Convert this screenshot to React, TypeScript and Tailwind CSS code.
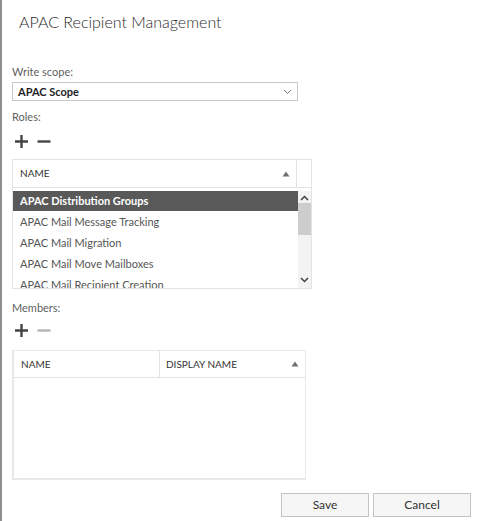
import React from "react";

const font = { fontFamily: '"Segoe UI", Lato, "Open Sans", sans-serif' };

function Plus({ color }: { color: string }) {
  return (
    <svg width="15" height="15" viewBox="0 0 15 15">
      <path d="M7.5 1v13M1 7.5h13" stroke={color} strokeWidth="2.4" />
    </svg>
  );
}
function Minus({ color }: { color: string }) {
  return (
    <svg width="14" height="15" viewBox="0 0 14 15">
      <path d="M0.5 7.5h13" stroke={color} strokeWidth="2.4" />
    </svg>
  );
}
function SortUp() {
  return (
    <svg width="8" height="6" viewBox="0 0 8 6">
      <path d="M4 0.5L7.5 5.5H0.5Z" fill="#707070" />
    </svg>
  );
}
function Chev({ up }: { up?: boolean }) {
  return (
    <svg width="9" height="6" viewBox="0 0 9 6">
      <path d={up ? "M1 5L4.5 1.5L8 5" : "M1 1L4.5 4.5L8 1"} stroke="#404040" strokeWidth="1.5" fill="none" />
    </svg>
  );
}

const roles = [
  "APAC Distribution Groups",
  "APAC Mail Message Tracking",
  "APAC Mail Migration",
  "APAC Mail Move Mailboxes",
  "APAC Mail Recipient Creation",
];

export default function App() {
  return (
    <div
      className="w-[478px] h-[521px] bg-white border-l-2 border-[#8e8e8e] flex flex-col pl-[10px] overflow-hidden text-[#333]"
      style={font}
    >
      <div className="pt-[10px] pl-[7px] text-[16px] leading-[24px] font-light text-[#2b2b2b]">
        APAC Recipient Management
      </div>

      <div className="mt-[30px] text-[11px] leading-[16px] text-[#5f5f5f]">Write scope:</div>
      <div className="mt-[2px] w-[286px] h-[19px] border border-[#c8c8c8] flex items-center justify-between pl-[5px] pr-[5px]">
        <span className="text-[11px] font-bold text-[#222] leading-none">APAC Scope</span>
        <svg width="9" height="6" viewBox="0 0 9 6">
          <path d="M1 1L4.5 4.5L8 1" stroke="#777" strokeWidth="1" fill="none" />
        </svg>
      </div>

      <div className="mt-[8px] text-[11px] leading-[16px] text-[#5f5f5f]">Roles:</div>
      <div className="mt-[9px] flex items-center gap-[8px] pl-[2px] h-[15px]">
        <Plus color="#444" />
        <Minus color="#444" />
      </div>

      <div className="mt-[10px] w-[300px] h-[130px] border border-[#e3e3e3] flex flex-col">
        <div className="h-[28px] flex border-b border-[#e3e3e3]">
          <div className="w-[284px] flex items-center justify-between pl-[7px] pr-[6px] border-r border-[#e3e3e3]">
            <span className="text-[10px] text-[#333]">NAME</span>
            <SortUp />
          </div>
          <div className="flex-1" />
        </div>
        <div className="flex-1 flex overflow-hidden pt-[3px]">
          <div className="w-[285px] flex flex-col overflow-hidden">
            {roles.map((r, i) => (
              <div
                key={r}
                className={
                  i === 0
                    ? "h-[20px] shrink-0 flex items-center pl-[7px] bg-[#595959] text-white font-bold text-[11px] mb-[1px]"
                    : "h-[21px] shrink-0 flex items-center pl-[7px] text-[#555] text-[11px]"
                }
              >
                {r}
              </div>
            ))}
          </div>
          <div className="flex-1 bg-[#f3f3f3] flex flex-col items-center">
            <div className="h-[12px] flex items-center pt-[2px]">
              <Chev up />
            </div>
            <div className="w-full h-[32px] bg-[#cdcdcd]" />
            <div className="flex-1" />
            <div className="h-[16px] flex items-center">
              <Chev />
            </div>
          </div>
        </div>
      </div>

      <div className="mt-[11px] text-[11px] leading-[16px] text-[#5f5f5f]">Members:</div>
      <div className="mt-[7px] flex items-center gap-[8px] pl-[2px] h-[15px]">
        <Plus color="#444" />
        <Minus color="#b4b4b4" />
      </div>

      <div className="mt-[12px] w-[294px] h-[130px] border-2 border-t border-r border-[#e6e9ea] flex flex-col">
        <div className="h-[27px] flex border-b border-[#e3e3e3]">
          <div className="w-[146px] flex items-center pl-[7px] border-r border-[#e3e3e3]">
            <span className="text-[10px] text-[#333]">NAME</span>
          </div>
          <div className="flex-1 flex items-center justify-between pl-[6px] pr-[6px]">
            <span className="text-[10px] text-[#333]">DISPLAY NAME</span>
            <SortUp />
          </div>
        </div>
        <div className="flex-1" />
      </div>

      <div className="mt-[13px] flex justify-end gap-[4px] pr-[7px]">
        <button className="w-[88px] h-[24px] border border-[#c4c4c4] bg-[#f6f6f6] text-[12px] text-[#333]">Save</button>
        <button className="w-[98px] h-[24px] border border-[#c4c4c4] bg-[#f6f6f6] text-[12px] text-[#333]">Cancel</button>
      </div>
    </div>
  );
}
